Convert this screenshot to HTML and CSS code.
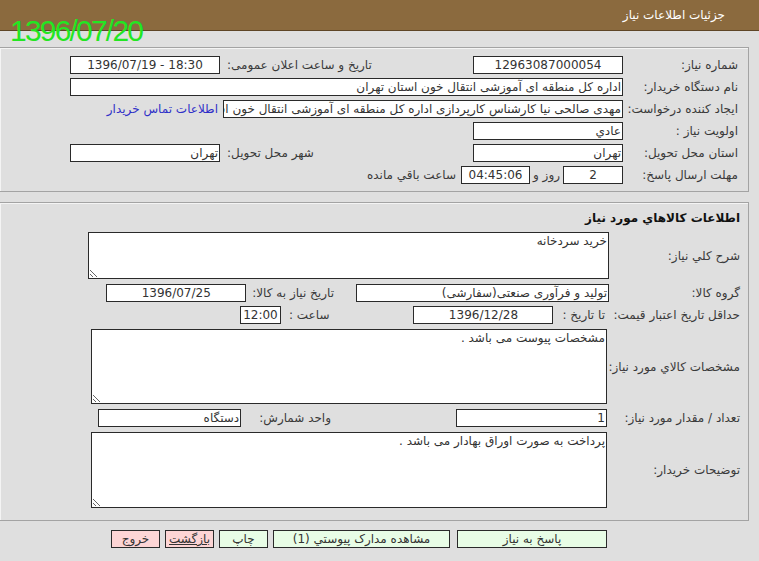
FILE: index.html
```html
<!DOCTYPE html>
<html lang="fa" dir="rtl">
<head>
<meta charset="utf-8">
<title>جزئیات اطلاعات نیاز</title>
<link rel="stylesheet" href="styles.css">
</head>
<body>
<div class="header"><span class="header-title">جزئیات اطلاعات نیاز</span></div>
<div class="stamp">1396/07/20</div>

<div class="panel panel-top">
  <div class="row">
    <span class="lbl">شماره نیاز:</span>
    <span class="box w150 center num">12963087000054</span>
    <span class="lbl2 ml-auto">تاریخ و ساعت اعلان عمومی:</span>
    <span class="box w150 center num ltr">1396/07/19 - 18:30</span>
  </div>
  <div class="row">
    <span class="lbl">نام دستگاه خریدار:</span>
    <span class="box grow">اداره کل منطقه ای آموزشی انتقال خون استان تهران</span>
  </div>
  <div class="row">
    <span class="lbl">ایجاد کننده درخواست:</span>
    <span class="box w400 clip"><span class="clip-inner">مهدی صالحی نیا کارشناس کارپردازی اداره کل منطقه ای آموزشی انتقال خون استان تهران</span></span>
    <a class="link" href="#">اطلاعات تماس خریدار</a>
  </div>
  <div class="row">
    <span class="lbl">اولویت نیاز :</span>
    <span class="box w150">عادي</span>
  </div>
  <div class="row">
    <span class="lbl">استان محل تحویل:</span>
    <span class="box w150">تهران</span>
    <span class="lbl2 ml-auto">شهر محل تحویل:</span>
    <span class="box w150">تهران</span>
  </div>
  <div class="row">
    <span class="lbl">مهلت ارسال پاسخ:</span>
    <span class="box w60 center num">2</span>
    <span class="txt txt-tight">روز و</span>
    <span class="box w69 center num">04:45:06</span>
    <span class="txt">ساعت باقي مانده</span>
  </div>
</div>

<div class="panel panel-goods">
  <div class="title">اطلاعات کالاهاي مورد نیاز</div>
  <div class="row row-area">
    <span class="lbl lbl-wide">شرح کلي نیاز:</span>
    <textarea class="area area-1" readonly>خرید سردخانه</textarea>
  </div>
  <div class="row row-g">
    <span class="lbl lbl-wide">گروه کالا:</span>
    <span class="box w253">تولید و فرآوری صنعتی(سفارشی)</span>
    <span class="txt gap-22">تاریخ نیاز به کالا:</span>
    <span class="box w140 center num gap-6">1396/07/25</span>
  </div>
  <div class="row row-d">
    <span class="lbl lbl-wide">حداقل تاریخ اعتبار قیمت:</span>
    <span class="txt gap-4">تا تاریخ :</span>
    <span class="box w140 center num gap-9">1396/12/28</span>
    <span class="txt gap-84">ساعت :</span>
    <span class="box w41 center num gap-8">12:00</span>
  </div>
  <div class="row row-area">
    <span class="lbl lbl-wide2">مشخصات کالاي مورد نیاز:</span>
    <textarea class="area area-2" readonly>مشخصات پیوست می باشد .</textarea>
  </div>
  <div class="row row-t">
    <span class="lbl lbl-wide2">تعداد / مقدار مورد نیاز:</span>
    <span class="box w151 num">1</span>
    <span class="txt gap-125">واحد شمارش:</span>
    <span class="box w143 gap-18">دستگاه</span>
  </div>
  <div class="row row-area">
    <span class="lbl lbl-wide2">توضیحات خریدار:</span>
    <textarea class="area area-3" readonly>پرداخت به صورت اوراق بهادار می باشد .</textarea>
  </div>
</div>

<div class="actions">
  <button class="btn btn-green w150 first" type="button">پاسخ به نیاز</button>
  <button class="btn btn-green w177" type="button">مشاهده مدارک پیوستي (1)</button>
  <button class="btn btn-green w49" type="button">چاپ</button>
  <button class="btn btn-pink w49 focused" type="button">بازگشت</button>
  <button class="btn btn-pink w49" type="button">خروج</button>
</div>
</body>
</html>
```
FILE: styles.css
```css
html, body {
  margin: 0;
  padding: 0;
}
body {
  background: #dfdfdf;
  font-family: "DejaVu Sans", Tahoma, sans-serif;
  font-size: 12px;
  color: #3a3a3a;
  direction: rtl;
  width: 759px;
  height: 561px;
  overflow: hidden;
  position: relative;
}
.header {
  height: 30px;
  background: #8b6a3e;
  border-bottom: 1px solid #5e4526;
  display: flex;
  align-items: center;
  padding-right: 34px;
}
.header-title {
  color: #ffffff;
  font-size: 12px;
}
.stamp {
  position: absolute;
  top: 16px;
  left: 10px;
  font-family: "Liberation Sans", Arial, sans-serif;
  font-size: 30px;
  line-height: 30px;
  letter-spacing: -1.8px;
  color: #22e622;
  direction: ltr;
}
.panel {
  border: 1px solid #a3a3a3;
  box-shadow: inset 1px 1px 0 #f4f4f4;
  margin-left: -1px;
  margin-right: 10px;
  padding-left: 70px;
}
.panel-top {
  margin-top: 16px;
  padding-top: 6px;
  padding-bottom: 5px;
}
.panel-goods {
  margin-top: 10px;
  padding-top: 6px;
  padding-bottom: 9px;
}
.row {
  display: flex;
  align-items: center;
  height: 22px;
  white-space: nowrap;
}
.lbl {
  flex: none;
  width: 115px;
  padding-right: 10px;
}
.lbl-wide {
  width: 131px;
  padding-right: 8px;
}
.lbl-wide2 {
  width: 133px;
  padding-right: 8px;
}
.lbl2 {
  margin-left: 7px;
}
.ml-auto {
  margin-right: auto;
}
.txt {
  margin: 0 5px;
}
.txt-tight {
  margin: 0 3px;
}
.box {
  flex: none;
  box-sizing: border-box;
  height: 18px;
  line-height: 16px;
  border: 1px solid #2a2a2a;
  background: #ffffff;
  padding: 0 1px;
  color: #333;
  font-size: 12px;
  overflow: hidden;
}
.num {
  font-size: 12px;
}
.ltr {
  direction: ltr;
}
.center {
  text-align: center;
}
.grow {
  flex: 1;
}
.clip {
  white-space: nowrap;
  display: flex;
  justify-content: flex-start;
}
.clip-inner {
  flex: none;
}
.w41 { width: 41px; }
.w49 { width: 49px; }
.w60 { width: 60px; }
.w69 { width: 69px; }
.w140 { width: 140px; }
.w143 { width: 143px; }
.w150 { width: 150px; }
.w151 { width: 151px; }
.w177 { width: 177px; }
.w253 { width: 253px; }
.w400 { width: 400px; }
.link {
  color: #3030c8;
  text-decoration: none;
  margin-right: 5px;
}
.title {
  font-weight: bold;
  color: #111;
  padding-right: 8px;
  height: 20px;
  line-height: 18px;
}
.row-area {
  height: auto;
  margin: 3px 0;
}
.area {
  box-sizing: border-box;
  border: 1px solid #2a2a2a;
  background: #fff;
  font-family: "DejaVu Sans", Tahoma, sans-serif;
  font-size: 12px;
  color: #333;
  padding: 1px 1px;
  margin: 0;
  resize: both;
  overflow: hidden;
  direction: rtl;
}
.area-1 { width: 521px; height: 47px; }
.area-2 { width: 516px; height: 75px; }
.area-3 { width: 516px; height: 76px; }
.gap-4 { margin-right: 4px; margin-left: 0; }
.gap-6 { margin-right: 6px; }
.gap-8 { margin-right: 8px; }
.gap-9 { margin-right: 9px; }
.gap-18 { margin-right: 18px; }
.gap-22 { margin-right: 22px; margin-left: 0; }
.gap-84 { margin-right: 84px; margin-left: 0; }
.gap-125 { margin-right: 125px; margin-left: 0; }
.actions {
  display: flex;
  gap: 5px;
  margin-top: 9px;
  padding-right: 152px;
}
.actions .first {
  margin-left: 2px;
}
.btn {
  box-sizing: border-box;
  height: 18px;
  border: 1px solid #2a2a2a;
  font-family: "DejaVu Sans", Tahoma, sans-serif;
  font-size: 12px;
  color: #333;
  padding: 0;
  line-height: 16px;
  border-radius: 0;
}
.btn-green { background: #e8fde6; }
.btn-pink { background: #fdd5d5; }
.focused {
  text-decoration: underline;
}
```
